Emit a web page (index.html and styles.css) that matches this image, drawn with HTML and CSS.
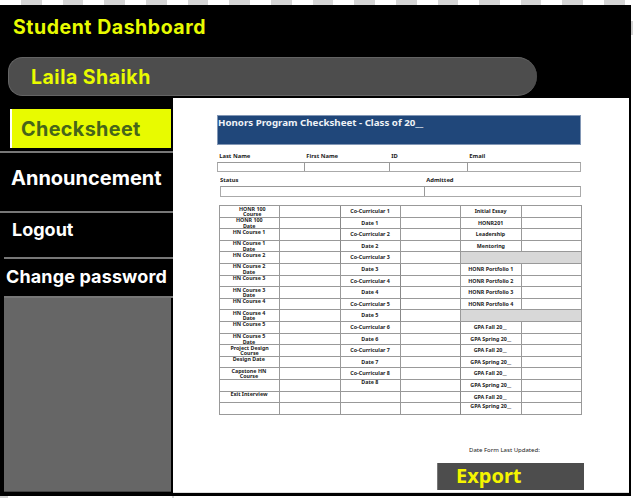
FILE: index.html
```html
<!DOCTYPE html>
<html lang="en">
<head>
<meta charset="utf-8">
<title>Student Dashboard</title>
<link rel="stylesheet" href="styles.css">
</head>
<body>
<div class="app">
  <header class="header">
    <h1 class="title">Student Dashboard</h1>
    <div class="user"><span>Laila Shaikh</span></div>
  </header>
  <div class="body">
    <nav class="sidebar">
      <div class="item active"><span>Checksheet</span></div>
      <div class="item announcement"><span>Announcement</span></div>
      <div class="item logout"><span>Logout</span></div>
      <div class="item password"><span>Change password</span></div>
      <div class="filler"></div>
    </nav>
    <main class="main">
      <h2 class="banner"><span>Honors Program Checksheet - Class of 20__</span></h2>
      <div class="labels four"><span>Last Name</span><span>First Name</span><span>ID</span><span>Email</span></div>
      <div class="fields four"><i></i><i></i><i></i><i></i></div>
      <div class="labels two"><span>Status</span><span>Admitted</span></div>
      <div class="fields two"><i></i><i></i></div>
      <div class="sheet">
        <div class="c top pair indent"><span>HONR 100<br>Course</span></div><div class="c"></div><div class="c"><span>Co-Curricular 1</span></div><div class="c"></div><div class="c"><span>Initial Essay</span></div><div class="c"></div>
        <div class="c top pair"><span>HONR 100<br>Date</span></div><div class="c"></div><div class="c"><span>Date 1</span></div><div class="c"></div><div class="c"><span>HONR201</span></div><div class="c"></div>
        <div class="c top"><span>HN Course 1</span></div><div class="c"></div><div class="c"><span>Co-Curricular 2</span></div><div class="c"></div><div class="c"><span>Leadership</span></div><div class="c"></div>
        <div class="c top pair"><span>HN Course 1<br>Date</span></div><div class="c"></div><div class="c"><span>Date 2</span></div><div class="c"></div><div class="c"><span>Mentoring</span></div><div class="c"></div>
        <div class="c top"><span>HN Course 2</span></div><div class="c"></div><div class="c"><span>Co-Curricular 3</span></div><div class="c"></div><div class="c shade"></div>
        <div class="c top pair"><span>HN Course 2<br>Date</span></div><div class="c"></div><div class="c"><span>Date 3</span></div><div class="c"></div><div class="c"><span>HONR Portfolio 1</span></div><div class="c"></div>
        <div class="c top"><span>HN Course 3</span></div><div class="c"></div><div class="c"><span>Co-Curricular 4</span></div><div class="c"></div><div class="c"><span>HONR Portfolio 2</span></div><div class="c"></div>
        <div class="c top pair"><span>HN Course 3<br>Date</span></div><div class="c"></div><div class="c"><span>Date 4</span></div><div class="c"></div><div class="c"><span>HONR Portfolio 3</span></div><div class="c"></div>
        <div class="c top"><span>HN Course 4</span></div><div class="c"></div><div class="c"><span>Co-Curricular 5</span></div><div class="c"></div><div class="c"><span>HONR Portfolio 4</span></div><div class="c"></div>
        <div class="c top pair"><span>HN Course 4<br>Date</span></div><div class="c"></div><div class="c"><span>Date 5</span></div><div class="c"></div><div class="c shade"></div>
        <div class="c top"><span>HN Course 5</span></div><div class="c"></div><div class="c"><span>Co-Curricular 6</span></div><div class="c"></div><div class="c"><span>GPA Fall 20__</span></div><div class="c"></div>
        <div class="c top pair"><span>HN Course 5<br>Date</span></div><div class="c"></div><div class="c"><span>Date 6</span></div><div class="c"></div><div class="c"><span>GPA Spring 20__</span></div><div class="c"></div>
        <div class="c top pair"><span>Project Design<br>Course</span></div><div class="c"></div><div class="c"><span>Co-Curricular 7</span></div><div class="c"></div><div class="c"><span>GPA Fall 20__</span></div><div class="c"></div>
        <div class="c top"><span>Design Date</span></div><div class="c"></div><div class="c"><span>Date 7</span></div><div class="c"></div><div class="c"><span>GPA Spring 20__</span></div><div class="c"></div>
        <div class="c top pair"><span>Capstone HN<br>Course</span></div><div class="c"></div><div class="c"><span>Co-Curricular 8</span></div><div class="c"></div><div class="c"><span>GPA Fall 20__</span></div><div class="c"></div>
        <div class="c"></div><div class="c"></div><div class="c top"><span>Date 8</span></div><div class="c"></div><div class="c"><span>GPA Spring 20__</span></div><div class="c"></div>
        <div class="c top"><span>Exit Interview</span></div><div class="c"></div><div class="c"></div><div class="c"></div><div class="c"><span>GPA Fall 20__</span></div><div class="c"></div>
        <div class="c"></div><div class="c"></div><div class="c"></div><div class="c"></div><div class="c top"><span>GPA Spring 20__</span></div><div class="c"></div>
      </div>
      <p class="updated"><span>Date Form Last Updated:</span></p>
      <div class="export"><span>Export</span></div>
    </main>
  </div>
</div>
</body>
</html>
```
FILE: styles.css
```css
* { box-sizing: border-box; }
body {
  margin: 0;
  height: 498px;
  overflow: hidden;
  padding-top: 5px;
  font-family: Inter, "Liberation Sans", sans-serif;
  background:
    linear-gradient(#d5d5d5, #d5d5d5) 631px 21px / 2px 14px no-repeat,
    linear-gradient(#d5d5d5, #d5d5d5) 0 496px / 8px 2px no-repeat,
    linear-gradient(#d5d5d5, #d5d5d5) 172px 496px / 2px 2px no-repeat,
    repeating-linear-gradient(90deg, #fff 0 21px, #d5d5d5 21px 41.65px) 0 0 / 633px 5px no-repeat,
    #fff;
}
span { display: inline-block; white-space: nowrap; transform-origin: 0 50%; }
.app { width: 631px; height: 491px; background: #000; }
.header { height: 93px; padding-top: 10px; }
.title { margin: 0 0 0 13px; font-size: 19.5px; letter-spacing: .54px; line-height: 25px; font-weight: 700; color: #e8fb00; height: 42px; }
.user {
  width: 529px; height: 39px; margin-left: 8px; padding-left: 22px;
  border: 1px solid #646464; border-right: 0;
  border-radius: 18px 24px 24px 18px; background: #4d4d4d;
  color: #e8fb00; font-size: 19.5px; letter-spacing: .5px; line-height: 39px; font-weight: 700;
}
.body { display: flex; height: 395px; }
.sidebar { width: 173px; display: flex; flex-direction: column; color: #fff; font-weight: 700; }
.item { border-bottom: 2px solid #777; }
.active { height: 55px; padding: 11px 2px 3px 10px; }
.active span { width: 161px; height: 39px; border-left: 2px solid #fff; padding-left: 9px; line-height: 41px; font-size: 19.8px; letter-spacing: .36px; color: #46651a; background: #e8fb00; }
.announcement { height: 60px; padding-left: 11px; font-size: 20px; line-height: 51px; }
.logout { height: 46px; margin-left: 4px; padding-left: 8px; font-size: 18px; line-height: 33px; }
.password { height: 39px; margin-left: 4px; padding-left: 2px; font-size: 18px; letter-spacing: .13px; line-height: 36px; }
.filler { flex: 1; margin: 0 2px 1px 4px; background: #666; border-bottom: 1px solid #444; }
.main { width: 456px; background: #fff; padding: 17px 0 0 44px; font-family: "Noto Sans", "Open Sans", sans-serif; color: #222; border-bottom: 1px solid #ddd; }
.banner { margin: 0; width: 364px; height: 30px; border: 1px solid #8297b5; background: #20477a; color: #eef2f7; font-size: 9px; line-height: 13px; }
.banner span { transform: scaleX(1.08); }
.labels { display: grid; font-size: 5.3px; line-height: 8px; font-weight: 700; height: 17px; padding-top: 7px; }
.labels span { padding-left: 2px; transform: scaleX(1.1); }
.four { grid-template-columns: 87px 84.5px 78px 1fr; width: 364px; }
.two { grid-template-columns: 204px 1fr; width: 361px; margin-left: 3px; }
.labels.two { height: 14px; padding-top: 4px; }
.labels.two span { padding-left: 0; }
.labels.two span + span { padding-left: 2px; }
.fields { display: grid; height: 10px; border: 1px solid #aaa; border-top-color: #999; }
.fields.four { grid-template-columns: 86px 84.5px 78px 1fr; }
.fields.two { grid-template-columns: 203px 1fr; }
.fields i { border-left: 1px solid #999; }
.fields i:first-child { border: 0; }
.fields.two { height: 11px; }
.sheet { display: grid; grid-template-columns: repeat(6, 60.35px); grid-auto-rows: 11.6px; width: 363px; margin: 8px 0 0 2px; border-top: 1px solid #999; border-left: 1px solid #999; }
.c { border-right: 1px solid #999; border-bottom: 1px solid #999; padding-top: 1px; padding-right: 1px; font-size: 4.9px; line-height: 5.6px; font-weight: 700; text-align: center; display: flex; align-items: center; justify-content: center; min-width: 0; min-height: 0; }
.c span { transform: scaleX(1.09); transform-origin: 50% 50%; }
.c:nth-child(6n+2) { border-right-color: #888; }
.top { align-items: flex-start; padding-top: .5px; }
.indent { padding-left: 7px; }
.shade { grid-column: span 2; background: #d8d8d8; }
.updated { margin: 31px 0 0 252px; font-size: 5.4px; line-height: 9px; }
.updated span { transform: scaleX(1.12); }
.export { margin: 8px 0 0 220px; width: 147px; height: 27px; padding-left: 18px; background: #4d4d4d; border-left: 1px solid #777; color: #f5f500; font-size: 20px; font-weight: 700; line-height: 25px; }
```
